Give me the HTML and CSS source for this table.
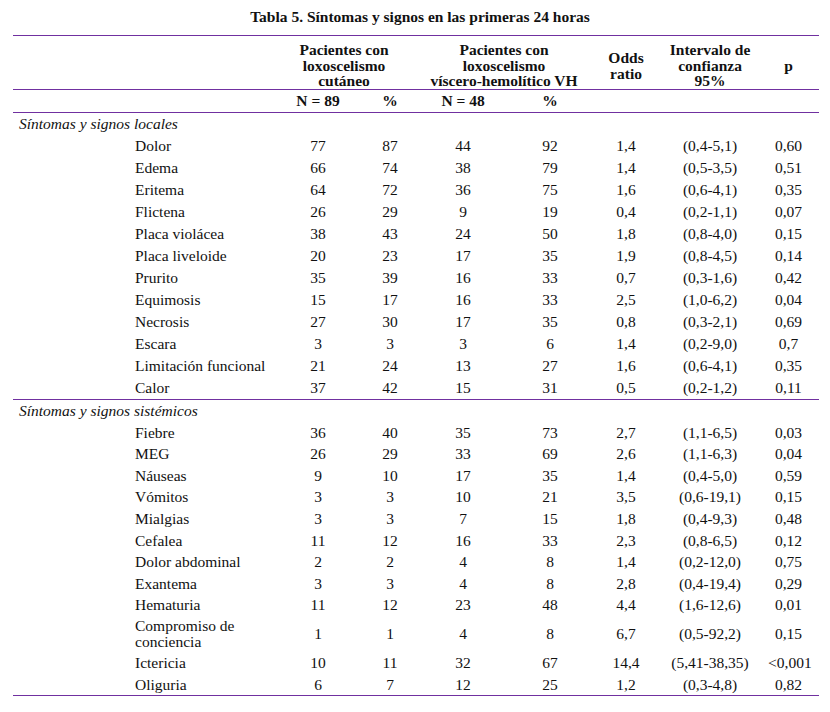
FILE: index.html
```html
<!DOCTYPE html>
<html lang="es">
<head>
<meta charset="utf-8">
<title>Tabla 5</title>
<link rel="stylesheet" href="styles.css">
</head>
<body>
<div class="page">
  <h1 class="title">Tabla 5. Síntomas y signos en las primeras 24 horas</h1>
  <table class="data">
    <colgroup>
      <col class="c-label"><col class="c-n1"><col class="c-p1"><col class="c-n2"><col class="c-p2"><col class="c-or"><col class="c-ci"><col class="c-pv">
    </colgroup>
    <thead>
      <tr class="head">
        <th></th>
        <th colspan="2" class="grp1">Pacientes con<br>loxoscelismo<br>cutáneo</th>
        <th colspan="2" class="grp2">Pacientes con<br>loxoscelismo<br>víscero-hemolítico VH</th>
        <th>Odds<br>ratio</th>
        <th>Intervalo de<br>confianza<br>95%</th>
        <th class="pv">p</th>
      </tr>
      <tr class="nrow">
        <th></th>
        <th>N = 89</th>
        <th>%</th>
        <th>N = 48</th>
        <th>%</th>
        <th></th>
        <th></th>
        <th></th>
      </tr>
    </thead>
    <tbody class="sec1">
      <tr class="section"><td colspan="8">Síntomas y signos locales</td></tr>
      <tr><td class="lbl">Dolor</td><td>77</td><td>87</td><td>44</td><td>92</td><td>1,4</td><td>(0,4-5,1)</td><td class="pv">0,60</td></tr>
      <tr><td class="lbl">Edema</td><td>66</td><td>74</td><td>38</td><td>79</td><td>1,4</td><td>(0,5-3,5)</td><td class="pv">0,51</td></tr>
      <tr><td class="lbl">Eritema</td><td>64</td><td>72</td><td>36</td><td>75</td><td>1,6</td><td>(0,6-4,1)</td><td class="pv">0,35</td></tr>
      <tr><td class="lbl">Flictena</td><td>26</td><td>29</td><td>9</td><td>19</td><td>0,4</td><td>(0,2-1,1)</td><td class="pv">0,07</td></tr>
      <tr><td class="lbl">Placa violácea</td><td>38</td><td>43</td><td>24</td><td>50</td><td>1,8</td><td>(0,8-4,0)</td><td class="pv">0,15</td></tr>
      <tr><td class="lbl">Placa liveloide</td><td>20</td><td>23</td><td>17</td><td>35</td><td>1,9</td><td>(0,8-4,5)</td><td class="pv">0,14</td></tr>
      <tr><td class="lbl">Prurito</td><td>35</td><td>39</td><td>16</td><td>33</td><td>0,7</td><td>(0,3-1,6)</td><td class="pv">0,42</td></tr>
      <tr><td class="lbl">Equimosis</td><td>15</td><td>17</td><td>16</td><td>33</td><td>2,5</td><td>(1,0-6,2)</td><td class="pv">0,04</td></tr>
      <tr><td class="lbl">Necrosis</td><td>27</td><td>30</td><td>17</td><td>35</td><td>0,8</td><td>(0,3-2,1)</td><td class="pv">0,69</td></tr>
      <tr><td class="lbl">Escara</td><td>3</td><td>3</td><td>3</td><td>6</td><td>1,4</td><td>(0,2-9,0)</td><td class="pv">0,7</td></tr>
      <tr><td class="lbl">Limitación funcional</td><td>21</td><td>24</td><td>13</td><td>27</td><td>1,6</td><td>(0,6-4,1)</td><td class="pv">0,35</td></tr>
      <tr class="last"><td class="lbl">Calor</td><td>37</td><td>42</td><td>15</td><td>31</td><td>0,5</td><td>(0,2-1,2)</td><td class="pv">0,11</td></tr>
    </tbody>
    <tbody class="sec2">
      <tr class="section"><td colspan="8">Síntomas y signos sistémicos</td></tr>
      <tr><td class="lbl">Fiebre</td><td>36</td><td>40</td><td>35</td><td>73</td><td>2,7</td><td>(1,1-6,5)</td><td class="pv">0,03</td></tr>
      <tr><td class="lbl">MEG</td><td>26</td><td>29</td><td>33</td><td>69</td><td>2,6</td><td>(1,1-6,3)</td><td class="pv">0,04</td></tr>
      <tr><td class="lbl">Náuseas</td><td>9</td><td>10</td><td>17</td><td>35</td><td>1,4</td><td>(0,4-5,0)</td><td class="pv">0,59</td></tr>
      <tr><td class="lbl">Vómitos</td><td>3</td><td>3</td><td>10</td><td>21</td><td>3,5</td><td>(0,6-19,1)</td><td class="pv">0,15</td></tr>
      <tr><td class="lbl">Mialgias</td><td>3</td><td>3</td><td>7</td><td>15</td><td>1,8</td><td>(0,4-9,3)</td><td class="pv">0,48</td></tr>
      <tr><td class="lbl">Cefalea</td><td>11</td><td>12</td><td>16</td><td>33</td><td>2,3</td><td>(0,8-6,5)</td><td class="pv">0,12</td></tr>
      <tr><td class="lbl">Dolor abdominal</td><td>2</td><td>2</td><td>4</td><td>8</td><td>1,4</td><td>(0,2-12,0)</td><td class="pv">0,75</td></tr>
      <tr><td class="lbl">Exantema</td><td>3</td><td>3</td><td>4</td><td>8</td><td>2,8</td><td>(0,4-19,4)</td><td class="pv">0,29</td></tr>
      <tr><td class="lbl">Hematuria</td><td>11</td><td>12</td><td>23</td><td>48</td><td>4,4</td><td>(1,6-12,6)</td><td class="pv">0,01</td></tr>
      <tr class="tall"><td class="lbl">Compromiso de conciencia</td><td>1</td><td>1</td><td>4</td><td>8</td><td>6,7</td><td>(0,5-92,2)</td><td class="pv">0,15</td></tr>
      <tr><td class="lbl">Ictericia</td><td>10</td><td>11</td><td>32</td><td>67</td><td>14,4</td><td>(5,41-38,35)</td><td class="pv">&lt;0,001</td></tr>
      <tr class="last"><td class="lbl">Oliguria</td><td>6</td><td>7</td><td>12</td><td>25</td><td>1,2</td><td>(0,3-4,8)</td><td class="pv">0,82</td></tr>
    </tbody>
  </table>
</div>
</body>
</html>
```

FILE: styles.css
```css
html, body {
  margin: 0;
  padding: 0;
  background: #ffffff;
}

body {
  font-family: "Liberation Serif", "Times New Roman", serif;
  font-size: 15.5px;
  color: #111111;
}

.page {
  width: 806px;
  margin-left: 13px;
}

.title {
  margin: 0;
  padding-top: 8px;
  padding-left: 8px;
  font-size: 15.5px;
  line-height: 18px;
  font-weight: bold;
  text-align: center;
  margin-bottom: 9px;
}

.data {
  width: 806px;
  border-collapse: collapse;
  table-layout: fixed;
  border-top: 1px solid #7030a0;
}

.c-label { width: 269px; }
.c-n1 { width: 72px; }
.c-p1 { width: 72px; }
.c-n2 { width: 74px; }
.c-p2 { width: 100px; }
.c-or { width: 52px; }
.c-ci { width: 116px; }
.c-pv { width: 51px; }

th, td {
  padding: 0;
  text-align: center;
  white-space: nowrap;
}

th {
  font-weight: bold;
  line-height: 15.5px;
}

.head th {
  vertical-align: middle;
  padding-top: 6px;
  padding-bottom: 0;
  height: 47px;
  border-bottom: 1px solid #7030a0;
}

.head .grp1 {
  padding-right: 20px;
}

.head .grp2 {
  padding-right: 18px;
}

.nrow th {
  line-height: 16px;
  padding: 3px 0;
  border-bottom: 1px solid #7030a0;
}

td {
  line-height: 16px;
  padding-top: 3px;
  padding-bottom: 3px;
  vertical-align: middle;
}

.sec2 td {
  line-height: 15.6px;
}

.sec2 tr.tall td {
  line-height: 16px;
  padding-top: 2px;
  padding-bottom: 2px;
}

.pv {
  padding-right: 10px !important;
}

td.lbl {
  text-align: left;
  padding-left: 122px;
  white-space: normal;
}

.section td {
  text-align: left;
  font-style: italic;
  padding-left: 6px;
}

tr.last td {
  border-bottom: 1px solid #7030a0;
}
```
